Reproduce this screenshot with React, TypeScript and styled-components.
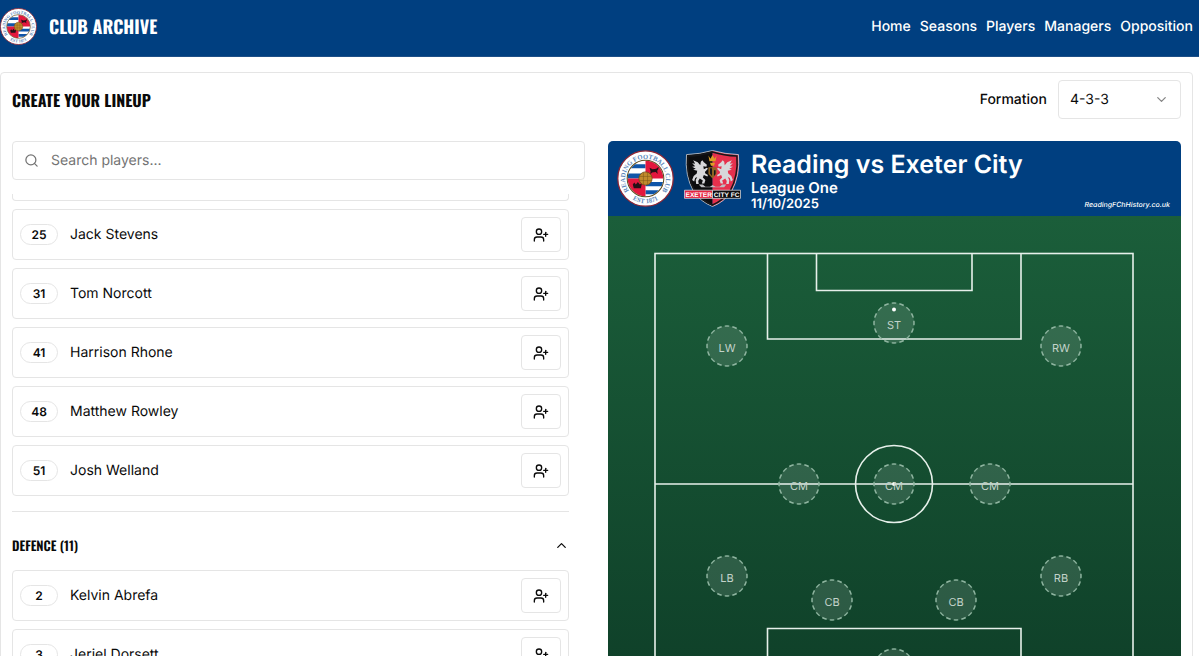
import React from "react";
import styled, { createGlobalStyle } from "styled-components";
import { ChevronDown, ChevronUp, Search, UserPlus } from "lucide-react";

const INTER = `Inter, "Liberation Sans", sans-serif`;
const CONDENSED = `Oswald, "Liberation Sans Narrow", "Roboto Condensed", "Liberation Sans", sans-serif`;

const GlobalStyle = createGlobalStyle`
  *, *::before, *::after { box-sizing: border-box; }
  body {
    margin: 0;
    background: #fff;
    color: #0a0a0a;
    font: 14px/20px ${INTER};
    text-rendering: geometricPrecision;
  }
  h1, h2, h3, p, ul { margin: 0; padding: 0; }
  button, input, select { font: inherit; color: inherit; text-rendering: inherit; }
`;

const Header = styled.header`
  display: flex;
  align-items: center;
  justify-content: space-between;
  height: 57px;
  padding: 0 6px 3px 0;
  background: #003f80;
  border-bottom: 1px solid #1d4f87;
  color: #fff;
`;

const Brand = styled.a`
  display: flex;
  align-items: center;
  gap: 12px;
  color: inherit;
  font: 700 18px/28px ${CONDENSED};
  text-decoration: none;
`;

const Nav = styled.nav`
  display: flex;
  gap: 9px;
  padding-top: 1px;
`;

const NavLink = styled.a`
  color: inherit;
  font-weight: 500;
  text-decoration: none;
`;

const Card = styled.main`
  margin: 15px 6px 16px 0;
  padding: 7px 11px 16px;
  border: 1px solid #e5e5e5;
  border-radius: 4px;
`;

const CardHeader = styled.div`
  display: flex;
  align-items: center;
  justify-content: space-between;
`;

const Title = styled.h1`
  font: 700 16px/28px ${CONDENSED};
`;

const Field = styled.div`
  display: flex;
  align-items: center;
  gap: 11px;
`;

const Label = styled.label`
  padding-top: 1px;
  font-weight: 500;
`;

const SelectBox = styled.div`
  display: grid;
  align-items: center;
  width: 123px;

  > * { grid-area: 1 / 1; }
  > svg {
    justify-self: end;
    margin-right: 12px;
    color: #858585;
    pointer-events: none;
  }
`;

const Select = styled.select`
  appearance: none;
  width: 100%;
  height: 39px;
  padding: 1px 11px 0;
  border: 1px solid #e5e5e5;
  border-radius: 4px;
  background: #fff;
`;

const Columns = styled.div`
  display: grid;
  grid-template-columns: 1fr 1fr;
  align-items: start;
  gap: 23px;
  margin-top: 22px;
`;

const SearchBox = styled.div`
  display: flex;
  align-items: center;
  gap: 12px;
  height: 39px;
  padding: 0 11px;
  border: 1px solid #e5e5e5;
  border-radius: 4px;
  color: #737373;
`;

const SearchInput = styled.input`
  flex: 1;
  min-width: 0;
  padding: 1px 0 0;
  border: 0;
  outline: 0;
  background: none;
  &::placeholder { color: #737373; opacity: 1; }
`;

const List = styled.div`
  margin: 14px 16px 0 0;
`;

const Rows = styled.ul`
  display: grid;
  gap: 8px;
  list-style: none;
`;

const RowEnd = styled.div`
  height: 7px;
  margin-bottom: 8px;
  border: 1px solid #e5e5e5;
  border-top: 0;
  border-radius: 0 0 4px 4px;
`;

const Row = styled.li`
  display: flex;
  align-items: center;
  gap: 12px;
  height: 51px;
  padding: 0 7px;
  border: 1px solid #e5e5e5;
  border-radius: 4px;
`;

const Shirt = styled.span`
  width: 38px;
  border: 1px solid #e5e5e5;
  border-radius: 11px;
  font-size: 12px;
  font-weight: 600;
  line-height: 19px;
  text-align: center;
`;

const Name = styled.span`
  flex: 1;
  padding-top: 1px;
`;

const AddButton = styled.button`
  display: grid;
  place-items: center;
  width: 40px;
  height: 35px;
  padding: 0;
  border: 1px solid #e5e5e5;
  border-radius: 4px;
  background: #fff;
`;

const GroupToggle = styled.button`
  display: flex;
  align-items: center;
  justify-content: space-between;
  width: 100%;
  height: 59px;
  margin-top: 15px;
  padding: 8px 0 0;
  border: 0;
  border-top: 1px solid #e5e5e5;
  background: none;
  font: 600 13px/20px ${CONDENSED};
`;

const Lineup = styled.section`
  overflow: hidden;
  border-radius: 5px;
`;

const MatchBar = styled.div`
  display: flex;
  align-items: center;
  gap: 10px;
  height: 75px;
  padding: 0 11px 0 9px;
  background: #003f80;
  color: #fff;
`;

const Match = styled.div`
  flex: 1;
  padding-top: 4px;
  font-weight: 600;
`;

const Fixture = styled.h2`
  font-size: 25px;
  font-weight: 600;
  line-height: 30px;
`;

const Competition = styled.p`
  font-size: 15px;
  line-height: 16px;
`;

const MatchDate = styled.p`
  font-size: 13px;
  line-height: 16px;
`;

const Credit = styled.p`
  align-self: flex-end;
  padding-bottom: 6px;
  font-size: 7px;
  font-style: italic;
  font-weight: 500;
  line-height: 10px;
`;

const Pitch = styled.div`
  position: relative;
  background: linear-gradient(#1b5e3a, #0d3b26);
  > svg { display: block; width: 100%; }
`;

const Slot = styled.button`
  position: absolute;
  display: grid;
  place-items: center;
  width: 42px;
  height: 42px;
  padding: 0;
  border: 0;
  border-radius: 50%;
  background: none;
  color: #c3d3ca;
  font-size: 11px;
  line-height: 14px;
  transform: translate(-50%, -50%);
  > * { grid-area: 1 / 1; }
  > span { padding-top: 3px; }
`;

const PITCH_W = 573;
const PITCH_H = 537;

const goalkeepers: [number, string][] = [
  [25, "Jack Stevens"],
  [31, "Tom Norcott"],
  [41, "Harrison Rhone"],
  [48, "Matthew Rowley"],
  [51, "Josh Welland"],
];

const defenders: [number, string][] = [
  [2, "Kelvin Abrefa"],
  [3, "Jeriel Dorsett"],
];

const slots: [string, number, number][] = [
  ["ST", 286, 107],
  ["LW", 119, 130],
  ["RW", 453, 130],
  ["CM", 191, 268],
  ["CM", 286, 268],
  ["CM", 382, 268],
  ["LB", 119, 360],
  ["RB", 453, 360],
  ["CB", 224, 384],
  ["CB", 348, 384],
  ["GK", 286, 453],
];

function ReadingCrest({ size, id }: { size: number; id: string }) {
  return (
    <svg width={size} height={size} viewBox="0 0 112 112" aria-hidden="true">
      <defs>
        <path id={`${id}-top`} d="M22 78A40 40 0 1 1 90 78" />
        <path id={`${id}-low`} d="M18 86A48 48 0 0 0 94 86" />
        <clipPath id={`${id}-disc`}><circle cx="56" cy="56" r="35" /></clipPath>
      </defs>
      <circle cx="56" cy="56" r="54.500" fill="#fff" stroke="#8f2533" strokeWidth="2.500" />
      <g clipPath={`url(#${id}-disc)`}>
        <path fill="#fff" d="M20 20h72v72H20z" />
        <path fill="#0f55a8" d="M20 28h36v8H20zM20 46h36v10H20zM56 63h36v8H56zM56 79h36v8H56z" />
        <path fill="#e3173e" d="M56 20h36v36H56zM20 56h36v36H20z" />
        <path fill="#251016" d="M64 35l6 3 7-1 5-4-1 5-2 3 1 6-4-4-7 1-4 4 1-6zM31 68l3-4 3 4 4-5 4 5 4-3-2 10H33z" />
      </g>
      <circle cx="56" cy="56" r="36" fill="none" stroke="#5e4a1e" strokeWidth="2" />
      <circle cx="56" cy="56" r="13" fill="#c08a2c" stroke="#6d4a14" strokeWidth="1.500" />
      <path d="M44 52h24M44 60h24M52 44v24M60 44v24" stroke="#7d5717" strokeWidth="1" />
      <g fill="#5b86ba" fontFamily="Liberation Serif, serif" fontSize="13" fontWeight="700" textAnchor="middle">
        <text><textPath href={`#${id}-top`} startOffset="50%">READING FOOTBALL CLUB</textPath></text>
        <text><textPath href={`#${id}-low`} startOffset="50%">EST 1871</textPath></text>
      </g>
    </svg>
  );
}

function ExeterCrest() {
  return (
    <svg width="57" height="57" viewBox="0 0 112 112" aria-hidden="true">
      <defs>
        <clipPath id="exeter-shield">
          <path d="M5 9Q32 8 56 1Q80 8 107 9Q111 50 93 82Q79 102 56 111Q33 102 19 82Q1 50 5 9Z" />
        </clipPath>
      </defs>
      <g clipPath="url(#exeter-shield)">
        <path fill="#0c0c0e" d="M0 0h56v112H0z" />
        <path fill="#e6304d" d="M56 0h56v112H56z" />
      </g>
      <path d="M5 9Q32 8 56 1Q80 8 107 9Q111 50 93 82Q79 102 56 111Q33 102 19 82Q1 50 5 9Z" fill="none" stroke="#d9d9dc" strokeWidth="1.500" />
      <path d="M8 12Q34 11 56 4Q78 11 104 12Q107 50 91 80Q77 99 56 108Q35 99 21 80Q5 50 8 12Z" fill="none" stroke="#17171a" strokeWidth="3" />
      <g fill="#d7d7da">
        <path id="exeter-horse" d="M36 20l3 4 6 5-1 4-6-1 1 6 6-3 2 2-6 6 1 3 5 3-1 3-7-3-2 5 5 5-2 7h-5l2-6-6-4-3 5 1 6h-5l-1-8 3-6-4 2-2 7-4-3 3-8 6-5 1-5-8-2 5-2-7-4 6-1-6-6 6 1-4-7 9 4 5 6 1-7z" />
        <use href="#exeter-horse" transform="matrix(-1 0 0 1 112 0)" />
      </g>
      <path fill="#dc9e24" d="M48 11l4 6 4-7 4 7 4-6-2 11H50zM51 25h10l-2 6h-6z" />
      <path fill="#8f6423" d="M48 34h16v13l-8 9-8-9z" />
      <path fill="#17171a" d="M51 36h4v15l-4-5zM59 40h3v7l-3 4z" />
      <path fill="#bdbdc1" d="M29 68h8l5 4h9l5-3 6 3h8l5-4h8l-4 5H34z" />
      <path fill="#e6233f" stroke="#d9d9dc" strokeWidth="1.500" d="M1 79h55v16H1z" />
      <path fill="#0c0c0e" stroke="#d9d9dc" strokeWidth="1.500" d="M56 79h55v16H56z" />
      <text x="56" y="92" fill="#fff" fontFamily="Liberation Sans, sans-serif" fontSize="13" fontWeight="700" textAnchor="middle">EXETER CITY FC</text>
    </svg>
  );
}

function PlayerRow({ number, name }: { number: number; name: string }) {
  return (
    <Row>
      <Shirt>{number}</Shirt>
      <Name>{name}</Name>
      <AddButton type="button" aria-label={name}>
        <UserPlus size={16} />
      </AddButton>
    </Row>
  );
}

export default function App() {
  return (
    <>
      <GlobalStyle />
      <Header>
        <Brand href="#">
          <ReadingCrest size={37} id="brand" />
          CLUB ARCHIVE
        </Brand>
        <Nav>
          {["Home", "Seasons", "Players", "Managers", "Opposition"].map((item) => (
            <NavLink key={item} href="#">{item}</NavLink>
          ))}
        </Nav>
      </Header>
      <Card>
        <CardHeader>
          <Title>CREATE YOUR LINEUP</Title>
          <Field>
            <Label htmlFor="formation">Formation</Label>
            <SelectBox>
              <Select id="formation"><option>4-3-3</option></Select>
              <ChevronDown size={15} strokeWidth={2} />
            </SelectBox>
          </Field>
        </CardHeader>
        <Columns>
          <section>
            <SearchBox>
              <Search size={15} />
              <SearchInput type="search" aria-label="Search players..." placeholder="Search players..." />
            </SearchBox>
            <List>
              <RowEnd />
              <Rows>
                {goalkeepers.map(([n, name]) => <PlayerRow key={n} number={n} name={name} />)}
              </Rows>
              <GroupToggle type="button" aria-expanded="true">
                DEFENCE (11)
                <ChevronUp size={15} />
              </GroupToggle>
              <Rows>
                {defenders.map(([n, name]) => <PlayerRow key={n} number={n} name={name} />)}
              </Rows>
            </List>
          </section>
          <Lineup>
            <MatchBar>
              <ReadingCrest size={57} id="home" />
              <ExeterCrest />
              <Match>
                <Fixture>Reading vs Exeter City</Fixture>
                <Competition>League One</Competition>
                <MatchDate>11/10/2025</MatchDate>
              </Match>
              <Credit>ReadingFChHistory.co.uk</Credit>
            </MatchBar>
            <Pitch>
              <svg viewBox={`0 0 ${PITCH_W} ${PITCH_H}`} fill="none" stroke="#e6f0ea" strokeWidth="1.600" aria-hidden="true">
                <rect x="47" y="37.500" width="478" height="461" />
                <path d="M47 268h478M159.500 37.500v85.500h253.500V37.500M208.500 37.500v37h155.500V37.500M159.500 498.500v-86h253.500v86M208.500 498.500v-37h155.500v37" />
                <circle cx="286" cy="268" r="38.500" />
                <g fill="#fff" stroke="none">
                  <circle cx="286" cy="93.500" r="2" />
                  <circle cx="286" cy="268" r="2" />
                </g>
              </svg>
              {slots.map(([role, x, y], i) => (
                <Slot
                  key={i}
                  type="button"
                  style={{ left: `${(x / PITCH_W) * 100}%`, top: `${(y / PITCH_H) * 100}%` }}
                >
                  <svg width="42" height="42" viewBox="0 0 42 42" aria-hidden="true">
                    <circle cx="21" cy="21" r="20" fill="#fff" fillOpacity="0.120" stroke="#8fb5a0" strokeWidth="1.500" pathLength="160" strokeDasharray="6 4" strokeDashoffset="3" />
                  </svg>
                  <span>{role}</span>
                </Slot>
              ))}
            </Pitch>
          </Lineup>
        </Columns>
      </Card>
    </>
  );
}
